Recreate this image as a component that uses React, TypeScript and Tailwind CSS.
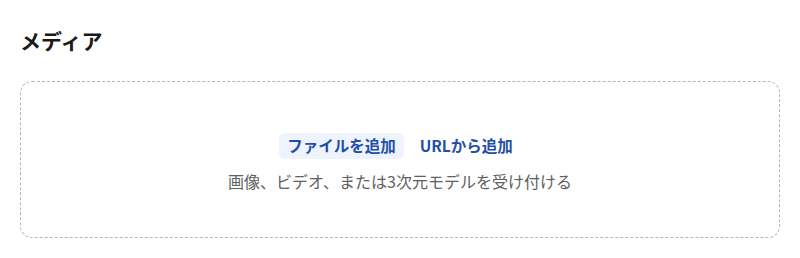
import React from 'react';

const App: React.FC = () => {
  return (
    <div
      className="w-[800px] h-[258px] bg-white px-5 pt-[26px]"
      style={{ fontFamily: '"Noto Sans CJK JP", "Noto Sans", sans-serif' }}
    >
      <h2 className="text-[21px] leading-[28px] font-bold text-[#1a1a1a]">メディア</h2>
      <div className="mt-[27px] h-[157px] rounded-[12px] border border-dashed border-[#b5b5b5] flex flex-col items-center pt-[51px]">
        <div className="flex items-center gap-2">
          <button className="h-[26px] px-2 rounded-[6px] bg-[#eef3fd] text-[#1f4fa8] text-[15.5px] font-bold leading-none">
            ファイルを追加
          </button>
          <button className="h-[26px] px-2 rounded-[6px] text-[#1f4fa8] text-[15.5px] font-bold leading-none">
            URLから追加
          </button>
        </div>
        <p className="mt-[11px] text-[16px] leading-[22px] text-[#616161]">
          画像、ビデオ、または3次元モデルを受け付ける
        </p>
      </div>
    </div>
  );
};

export default App;
